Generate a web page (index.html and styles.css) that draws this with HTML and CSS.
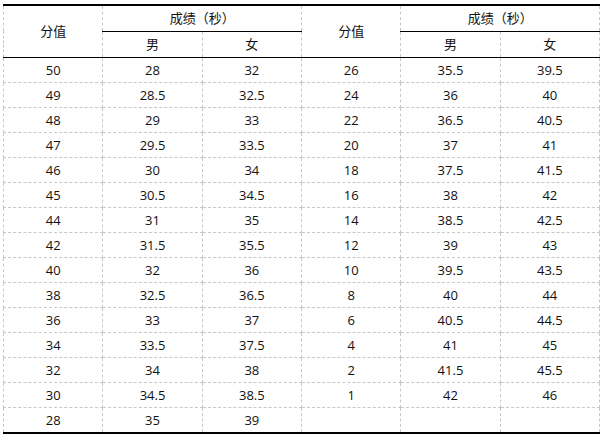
FILE: index.html
```html
<!DOCTYPE html>
<html lang="zh-CN">
<head>
<meta charset="utf-8">
<link rel="stylesheet" href="styles.css">
</head>
<body>
<table class="score-table">
  <colgroup>
    <col class="c"><col class="c"><col class="c"><col class="c"><col class="c"><col class="c">
  </colgroup>
  <thead>
    <tr class="h1">
      <th rowspan="2" class="hb">分值</th>
      <th colspan="2" class="hs">成绩（秒）</th>
      <th rowspan="2" class="hb">分值</th>
      <th colspan="2" class="hs">成绩（秒）</th>
    </tr>
    <tr class="h2">
      <th class="hb">男</th><th class="hb">女</th>
      <th class="hb">男</th><th class="hb">女</th>
    </tr>
  </thead>
  <tbody>
    <tr><td>50</td><td>28</td><td>32</td><td>26</td><td>35.5</td><td>39.5</td></tr>
    <tr><td>49</td><td>28.5</td><td>32.5</td><td>24</td><td>36</td><td>40</td></tr>
    <tr><td>48</td><td>29</td><td>33</td><td>22</td><td>36.5</td><td>40.5</td></tr>
    <tr><td>47</td><td>29.5</td><td>33.5</td><td>20</td><td>37</td><td>41</td></tr>
    <tr><td>46</td><td>30</td><td>34</td><td>18</td><td>37.5</td><td>41.5</td></tr>
    <tr><td>45</td><td>30.5</td><td>34.5</td><td>16</td><td>38</td><td>42</td></tr>
    <tr><td>44</td><td>31</td><td>35</td><td>14</td><td>38.5</td><td>42.5</td></tr>
    <tr><td>42</td><td>31.5</td><td>35.5</td><td>12</td><td>39</td><td>43</td></tr>
    <tr><td>40</td><td>32</td><td>36</td><td>10</td><td>39.5</td><td>43.5</td></tr>
    <tr><td>38</td><td>32.5</td><td>36.5</td><td>8</td><td>40</td><td>44</td></tr>
    <tr><td>36</td><td>33</td><td>37</td><td>6</td><td>40.5</td><td>44.5</td></tr>
    <tr><td>34</td><td>33.5</td><td>37.5</td><td>4</td><td>41</td><td>45</td></tr>
    <tr><td>32</td><td>34</td><td>38</td><td>2</td><td>41.5</td><td>45.5</td></tr>
    <tr><td>30</td><td>34.5</td><td>38.5</td><td>1</td><td>42</td><td>46</td></tr>
    <tr><td>28</td><td>35</td><td>39</td><td></td><td></td><td></td></tr>
  </tbody>
</table>
</body>
</html>
```
FILE: styles.css
```css
html, body {
  margin: 0;
  padding: 0;
  background: #fff;
}
body {
  padding: 4px 0 0 3px;
  font-family: "Open Sans", "Noto Sans CJK SC", sans-serif;
  font-size: 13px;
  color: #111;
}
.score-table {
  width: 597px;
  border-collapse: collapse;
  table-layout: fixed;
  border-top: 2px solid #000;
  border-bottom: 2px solid #000;
  border-left: 1px dashed #c8c8c8;
  border-right: 1px dashed #c8c8c8;
}
.score-table th,
.score-table td {
  border: 1px dashed #c8c8c8;
  padding: 0;
  text-align: center;
  font-weight: normal;
  line-height: 18px;
  vertical-align: middle;
}
.score-table .h1 { height: 26px; }
.score-table .h2 { height: 26px; }
.score-table tbody tr { height: 25px; }
.score-table tbody tr:last-child { height: 26px; }
.score-table .hs,
.score-table .hb { border-bottom: 1px solid #000; }
```
